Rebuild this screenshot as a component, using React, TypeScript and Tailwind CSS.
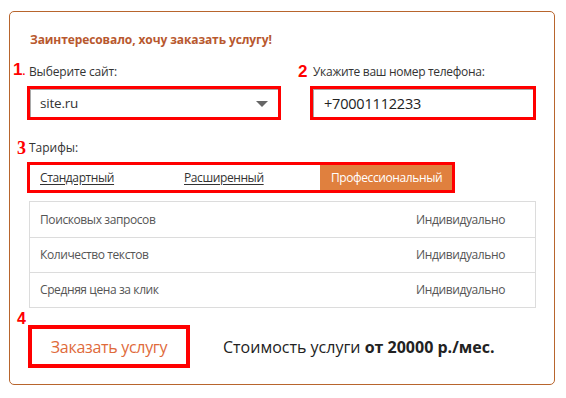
import React from "react";

const F = { fontFamily: '"Open Sans", "Noto Sans", sans-serif' };

export default function App() {
  return (
    <div className="w-[566px] h-[398px] bg-white pt-[11px] pl-[9px]" style={F}>
      <div className="w-[546px] h-[374px] border border-[#b8652d] rounded-[5px] flex flex-col">
        <div className="mt-[20px] ml-[20px] h-[16px] leading-[16px] text-[12px] font-bold text-[#b8582e] tracking-[-0.1px]">
          Заинтересовало, хочу заказать услугу!
        </div>

        <div className="mt-[16px] flex">
          <div className="ml-[3px] w-[285px] flex flex-col">
            <div className="flex items-end h-[16px] leading-[16px]">
              <span className="w-[16px] text-[17px] font-bold text-[#ff0000] leading-[16px]" style={{ fontFamily: '"Liberation Sans", sans-serif' }}>
                1<span className="text-[10px]">.</span>
              </span>
              <span className="text-[12px] text-[#333] tracking-[-0.15px]">Выберите сайт:</span>
            </div>
            <div className="mt-[6px] ml-[14px] w-[254px] h-[34px] border-[3px] border-[#f00] flex">
              <div className="flex-1 border-t border-l border-[#a9a9a9] flex items-center justify-between pl-[9px] pr-[10px]">
                <span className="text-[13.5px] text-[#333] tracking-[-0.2px]">site.ru</span>
                <svg width="12" height="6" viewBox="0 0 12 6"><polygon points="0,0 12,0 6,6" fill="#666" /></svg>
              </div>
            </div>
          </div>
          <div className="flex flex-col">
            <div className="flex items-end h-[16px] leading-[16px]">
              <span className="w-[15px] text-[17px] font-bold text-[#ff0000] leading-[16px]" style={{ fontFamily: '"Liberation Sans", sans-serif' }}>
                2
              </span>
              <span className="text-[12px] text-[#333] tracking-[-0.3px]">Укажите ваш номер телефона:</span>
            </div>
            <div className="mt-[6px] ml-[12px] w-[226px] h-[34px] border-[3px] border-[#f00] flex">
              <div className="flex-1 border-t border-l border-[#a9a9a9] flex items-center pl-[10px]">
                <span className="text-[14.5px] text-[#222] tracking-[-0.2px]">+70001112233</span>
              </div>
            </div>
          </div>
        </div>

        <div className="mt-[20px] ml-[7px] flex items-end h-[16px] leading-[16px]">
          <span className="w-[12px] text-[18px] font-bold text-[#ff0000] leading-[16px]" style={{ fontFamily: '"Liberation Serif", serif' }}>
            3
          </span>
          <span className="text-[12px] text-[#333]">Тарифы:</span>
        </div>

        <div className="mt-[6px] ml-[17px] w-[428px] h-[31px] border-[3px] border-[#f00] flex items-stretch text-[12px] tracking-[-0.4px]">
          <div className="w-[143px] pl-[10px] flex items-center">
            <span className="underline text-[#333] underline-offset-[2px]">Стандартный</span>
          </div>
          <div className="w-[147px] pl-[11px] flex items-center">
            <span className="underline text-[#333] underline-offset-[2px]">Расширенный</span>
          </div>
          <div className="flex-1 bg-[#e0803e] text-white flex items-center pl-[11px]">
            Профессиональный
          </div>
        </div>

        <div className="mt-[8px] ml-[19px] w-[507px] border border-[#dcdcdc] text-[12px] text-[#555] tracking-[-0.4px]">
          {["Поисковых запросов", "Количество текстов", "Средняя цена за клик"].map((t, i) => (
            <div key={t} className={`h-[35px] flex items-center justify-between pl-[10px] pr-[30px] ${i > 0 ? "border-t border-[#dcdcdc]" : ""}`}>
              <span>{t}</span>
              <span>Индивидуально</span>
            </div>
          ))}
        </div>

        <div className="ml-[7px] mt-[5px] h-[12px] leading-[12px] text-[16px] font-bold text-[#ff0000]" style={{ fontFamily: '"Liberation Sans", sans-serif' }}>
          4
        </div>
        <div className="flex items-center">
          <div className="ml-[18px] w-[162px] h-[43px] border-[4px] border-[#f00] flex items-center justify-center">
            <span className="text-[16px] text-[#e06a3a] tracking-[-0.3px]">Заказать услугу</span>
          </div>
          <div className="ml-[33px] text-[16px] text-[#222]">
            Стоимость услуги <span className="font-bold">от 20000 р./мес.</span>
          </div>
        </div>
      </div>
    </div>
  );
}
